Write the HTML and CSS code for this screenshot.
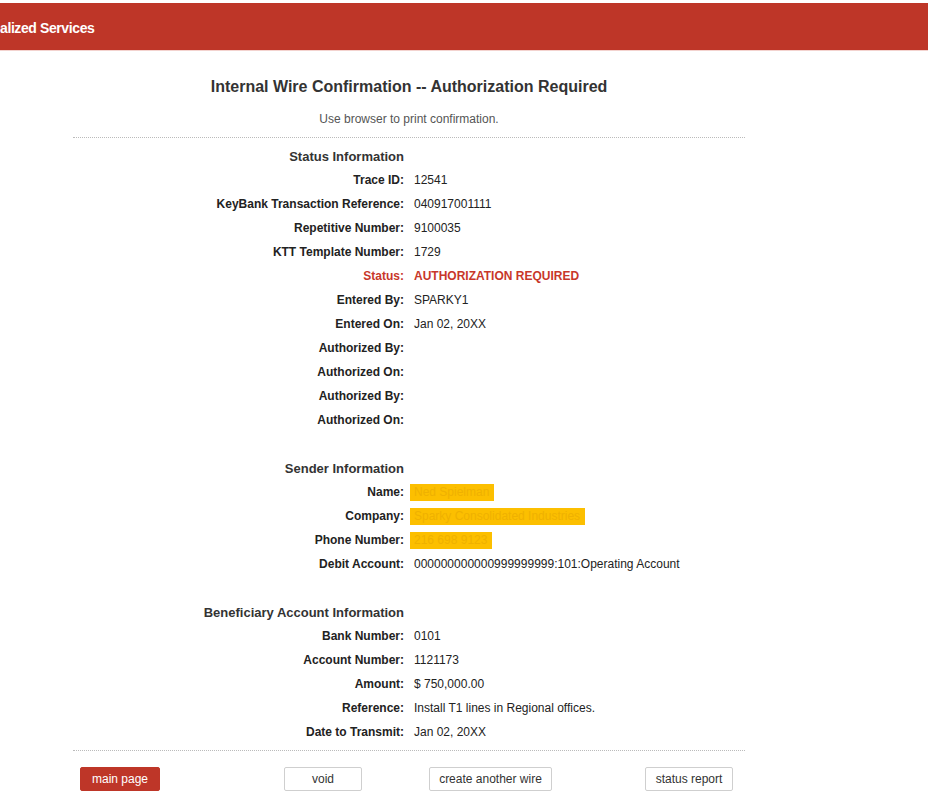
FILE: index.html
```html
<!DOCTYPE html>
<html lang="en">
<head>
<meta charset="utf-8">
<title>Internal Wire Confirmation</title>
<link rel="stylesheet" href="styles.css">
</head>
<body>
<header class="topbar"><span class="brand">alized Services</span></header>
<main class="page">
  <h1 class="title">Internal Wire Confirmation -- Authorization Required</h1>
  <p class="note">Use browser to print confirmation.</p>
  <div class="details">
    <div class="grid">
      <div class="head">Status Information</div><div></div>
      <div class="lbl">Trace ID:</div><div class="val">12541</div>
      <div class="lbl">KeyBank Transaction Reference:</div><div class="val">040917001111</div>
      <div class="lbl">Repetitive Number:</div><div class="val">9100035</div>
      <div class="lbl">KTT Template Number:</div><div class="val">1729</div>
      <div class="lbl alert">Status:</div><div class="val alert strong">AUTHORIZATION REQUIRED</div>
      <div class="lbl">Entered By:</div><div class="val">SPARKY1</div>
      <div class="lbl">Entered On:</div><div class="val">Jan 02, 20XX</div>
      <div class="lbl">Authorized By:</div><div class="val"></div>
      <div class="lbl">Authorized On:</div><div class="val"></div>
      <div class="lbl">Authorized By:</div><div class="val"></div>
      <div class="lbl">Authorized On:</div><div class="val"></div>
      <div class="spacer"></div><div class="spacer"></div>
      <div class="head">Sender Information</div><div></div>
      <div class="lbl">Name:</div><div class="val"><span class="mask">Ned Spielman</span></div>
      <div class="lbl">Company:</div><div class="val"><span class="mask">Sparky Consolidated Industries</span></div>
      <div class="lbl">Phone Number:</div><div class="val"><span class="mask">216 698 9123</span></div>
      <div class="lbl">Debit Account:</div><div class="val">000000000000999999999:101:Operating Account</div>
      <div class="spacer"></div><div class="spacer"></div>
      <div class="head">Beneficiary Account Information</div><div></div>
      <div class="lbl">Bank Number:</div><div class="val">0101</div>
      <div class="lbl">Account Number:</div><div class="val">1121173</div>
      <div class="lbl">Amount:</div><div class="val">$ 750,000.00</div>
      <div class="lbl">Reference:</div><div class="val">Install T1 lines in Regional offices.</div>
      <div class="lbl">Date to Transmit:</div><div class="val">Jan 02, 20XX</div>
    </div>
  </div>
  <div class="actions">
    <button class="btn primary b-main">main page</button>
    <button class="btn b-void">void</button>
    <button class="btn b-create">create another wire</button>
    <button class="btn b-status">status report</button>
  </div>
</main>
</body>
</html>
```
FILE: styles.css
```css
html, body {
  margin: 0;
  padding: 0;
  background: #fff;
}
body {
  font-family: "Liberation Sans", Arial, Helvetica, sans-serif;
  color: #222;
  font-size: 12px;
}
.topbar {
  margin-top: 3px;
  height: 48px;
  background: #be3628;
  border-bottom: 1px solid #f3d3cf;
  display: flex;
  align-items: center;
  box-sizing: border-box;
}
.brand {
  color: #fff;
  font-weight: bold;
  font-size: 14px;
  letter-spacing: -0.4px;
  padding-top: 2px;
}
.page {
  width: 672px;
  margin-left: 73px;
}
.title {
  margin: 0;
  padding-top: 26px;
  text-align: center;
  font-size: 16px;
  line-height: 20px;
  font-weight: bold;
  color: #333;
}
.note {
  margin: 14px 0 0;
  text-align: center;
  font-size: 12px;
  line-height: 16px;
  color: #555;
}
.details {
  margin-top: 10px;
  border-top: 1px dotted #bbb;
  border-bottom: 1px dotted #bbb;
  padding: 6px 0 6px;
}
.grid {
  display: grid;
  grid-template-columns: 331px 1fr;
  column-gap: 10px;
  grid-auto-rows: 24px;
  align-items: center;
}
.head {
  text-align: right;
  font-weight: bold;
  font-size: 13px;
  color: #333;
}
.lbl {
  text-align: right;
  font-weight: bold;
  color: #222;
}
.val {
  color: #222;
}
.alert {
  color: #c8372a;
}
.strong {
  font-weight: bold;
}
.mask {
  display: inline-block;
  background: #fcbf00;
  color: #efb100;
  padding: 2px 5px 2px 4px;
  margin-left: -4px;
  line-height: 13px;
}
.actions {
  display: flex;
  align-items: center;
  margin-top: 16px;
  padding-left: 7px;
}
.btn {
  font-family: "Liberation Sans", Arial, Helvetica, sans-serif;
  font-size: 12px;
  height: 24px;
  padding: 0;
  border: 1px solid #cfcfcf;
  border-radius: 2px;
  background: #fff;
  color: #333;
}
.primary {
  background: #be3628;
  border-color: #be3628;
  color: #fff;
}
.b-main { width: 80px; }
.b-void { width: 78px; margin-left: 124px; }
.b-create { width: 123px; margin-left: 67px; }
.b-status { width: 88px; margin-left: 93px; }
```
